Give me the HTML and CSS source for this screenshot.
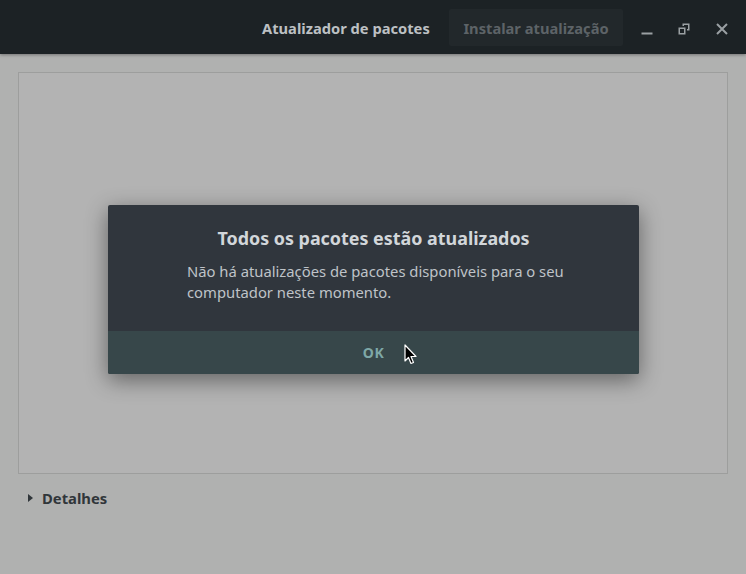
FILE: index.html
```html
<!DOCTYPE html>
<html lang="pt">
<head>
<meta charset="utf-8">
<link rel="stylesheet" href="styles.css">
</head>
<body>
<div class="window">
  <header class="headerbar">
    <span class="title">Atualizador de pacotes</span>
    <button class="install">Instalar atualização</button>
    <div class="controls">
      <span class="ctl"><svg width="12" height="12" viewBox="0 0 12 12"><rect x="0.5" y="9.5" width="11" height="2" fill="#9aa0a3"/></svg></span>
      <span class="ctl"><svg width="12" height="12" viewBox="0 0 12 12"><path d="M4.5 0.5h7v7h-2.5v-1.5h1v-4h-4v1h-1.5z M0.5 4.5h7v7h-7z M2 6v4h4v-4z" fill="#9aa0a3" fill-rule="evenodd"/></svg></span>
      <span class="ctl"><svg width="12" height="12" viewBox="0 0 12 12"><path d="M1 1L11 11M11 1L1 11" stroke="#9aa0a3" stroke-width="2"/></svg></span>
    </div>
  </header>
  <main class="content">
    <div class="panel"></div>
    <div class="expander"><span class="arrow"></span><span>Detalhes</span></div>
  </main>
  <div class="dialog">
    <div class="dlg-body">
      <h1>Todos os pacotes estão atualizados</h1>
      <p>Não há atualizações de pacotes disponíveis para o seu computador neste momento.</p>
    </div>
    <div class="dlg-actions"><span class="ok">OK</span></div>
  </div>
  <svg class="cursor" width="14" height="22" viewBox="0 0 14 22"><path d="M1 1L1 17L4.5 13.5L7 19.5L9.5 18.5L7 12.5L12 12.5Z" fill="#000" stroke="#fff" stroke-width="1.2" stroke-linejoin="round"/></svg>
</div>
</body>
</html>
```
FILE: styles.css
```css
* { box-sizing: border-box; }
html, body { margin: 0; padding: 0; }
body {
  width: 746px;
  height: 574px;
  overflow: hidden;
  font-family: "Noto Sans", "Open Sans", sans-serif;
  background: #b0b1b0;
}
.window {
  position: relative;
  width: 746px;
  height: 574px;
  display: flex;
  flex-direction: column;
}
.headerbar {
  height: 54px;
  flex: none;
  background: #1c2225;
  display: flex;
  align-items: center;
  padding: 0 0 0 262px;
  box-shadow: 0 1px 3px rgba(0,0,0,0.35);
  position: relative;
  z-index: 1;
}
.title {
  font-weight: bold;
  font-size: 14.7px;
  color: #bcc0c3;
  width: 187px;
  flex: none;
  white-space: nowrap;
  padding-top: 2px;
}
.install {
  font-family: inherit;
  font-weight: bold;
  font-size: 14.7px;
  color: #5d6367;
  background: #22282b;
  border: none;
  border-radius: 2px;
  height: 37px;
  width: 174px;
  padding: 2px 0 0 0;
  flex: none;
}
.controls {
  display: flex;
  margin-left: 5px;
  padding-top: 3px;
}
.ctl {
  width: 37.5px;
  height: 37px;
  display: flex;
  align-items: center;
  justify-content: center;
}
.content {
  flex: 1;
  padding: 18px 18px 0 18px;
  display: flex;
  flex-direction: column;
}
.panel {
  height: 402px;
  border: 1px solid #9d9e9d;
  background: #b3b3b3;
}
.expander {
  display: flex;
  align-items: center;
  margin-top: 14px;
  padding-left: 10px;
  font-weight: bold;
  font-size: 14.8px;
  color: #30363a;
  height: 20px;
}
.arrow {
  width: 0; height: 0;
  border-top: 4.5px solid transparent;
  border-bottom: 4.5px solid transparent;
  border-left: 5px solid #30363a;
  margin-right: 9px;
}
.dialog {
  position: absolute;
  left: 108px;
  top: 205px;
  width: 531px;
  height: 169px;
  background: #30363d;
  border-radius: 2px;
  box-shadow: 0 6px 22px rgba(0,0,0,0.45);
  display: flex;
  flex-direction: column;
  overflow: hidden;
}
.dlg-body {
  flex: 1;
  padding: 21px 60px 0 79px;
}
.dlg-body h1 {
  margin: 0 0 0 -19px;
  text-align: center;
  font-size: 17.9px;
  font-weight: bold;
  color: #d2d6da;
  line-height: 24px;
}
.dlg-body p {
  margin: 11px 0 0 0;
  font-size: 14.8px;
  line-height: 21px;
  color: #bfc3c8;
}
.dlg-actions {
  height: 43px;
  background: #37474a;
  display: flex;
  align-items: center;
  justify-content: center;
}
.ok {
  font-weight: bold;
  font-size: 14px;
  color: #7ea8a7;
  letter-spacing: 0.5px;
}
.cursor {
  position: absolute;
  left: 404px;
  top: 344px;
}
```
